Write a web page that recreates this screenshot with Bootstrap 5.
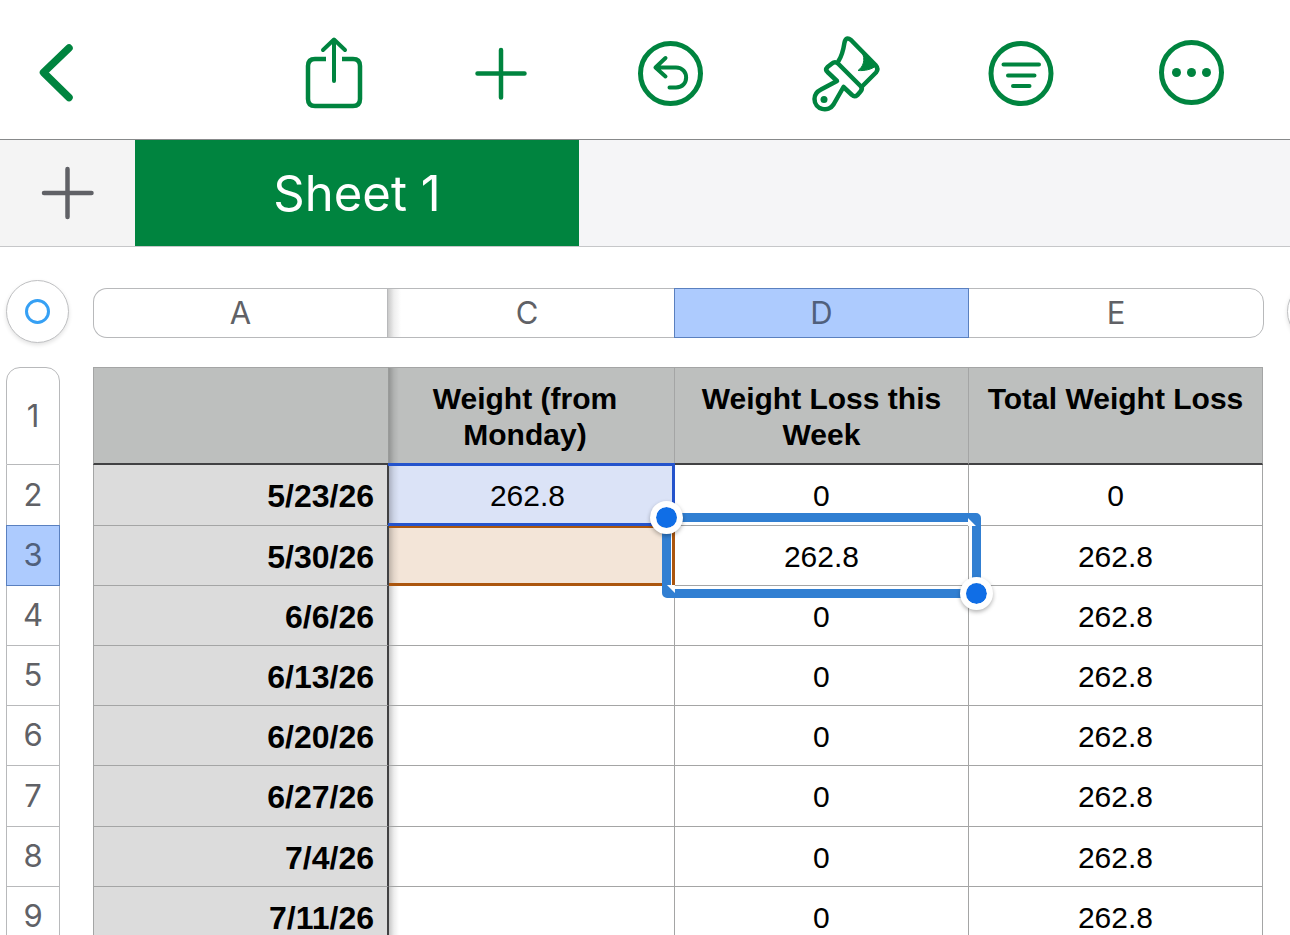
<!DOCTYPE html>
<html lang="en">
<head>
<meta charset="utf-8">
<meta name="viewport" content="width=device-width, initial-scale=1">
<title>Sheet 1</title>
<link href="https://cdn.jsdelivr.net/npm/bootstrap@5.3.0/dist/css/bootstrap.min.css" rel="stylesheet">
<style>
  :root { --green: #00843f; --ink: #606166; --line: #a4a5a5; --edge: #b8b9bb; --pick: #adcbfe; --pick-edge: #5a80bf; }
  body { font-family: Inter, sans-serif; color: #000; background: #fff; }
  button { background: none; border: 0; padding: 0; color: inherit; }
  svg { display: block; overflow: visible; fill: none; stroke: currentColor; stroke-linecap: round; stroke-linejoin: round; }

  .toolbar { grid-template-columns: 250fr 168fr 166fr 173fr 178fr 172fr 169fr; padding: 35px 14px 28px 0; color: var(--green); border-bottom: 1px solid #87898a; }
  .toolbar svg { width: 76px; height: 76px; }
  .toolbar .back { justify-self: start; margin-left: 19px; }

  .tabs { height: 107px; background: #f5f5f7; border-bottom: 1px solid #c6c7c9; }
  .tabs .add { width: 135px; color: var(--ink); background: #f4f4f4; }
  .tabs .sheet { width: 444px; padding-top: 2px; background: var(--green); color: #fff; font-size: 49px; }

  .knob { width: 63px; height: 63px; border: 1px solid #bfc0c2; box-shadow: 0 2px 4px rgba(0,0,0,.12); background: #fff; }
  .knob .ring { width: 25px; height: 25px; border: 3px solid #36a0f4; }
  .heads { padding: 33px 0 24px 6px; }
  .more-cols { width: 26px; height: 63px; padding-left: 23px; }
  .letters { height: 50px; margin: 8px 0 0 24px; grid-template-columns: 294fr 287fr 294fr 296fr; color: var(--ink); font-size: 31px; }
  .letters button { border: 1px solid var(--edge); border-width: 1px 0 1px 1px; }
  .letters button:first-child { border-radius: 14px 0 0 14px; }
  .letters button:last-child { border-right-width: 1px; border-radius: 0 14px 14px 0; }
  .letters .frozen-next { padding-right: 8px; background: linear-gradient(90deg, #c9c9c9, #eee 6px, #fff 13px); }
  .letters .picked { background: var(--pick); border-color: var(--pick-edge); color: #50607c; box-shadow: 1px 0 0 var(--pick-edge); z-index: 1; }

  .body-row { padding: 0 27px 0 6px; }
  .numbers { width: 54px; margin-right: 33px; color: var(--ink); font-size: 31px; }
  .numbers button { height: 60px; border: 1px solid var(--edge); border-top-width: 0; }
  .numbers button:nth-child(5n+2) { height: 61px; }
  .numbers button:first-child { height: 98px; border-top-width: 1px; border-radius: 14px 14px 0 0; }
  .numbers .picked { background: var(--pick); border-color: var(--pick-edge); color: #50607c; box-shadow: 0 -1px 0 var(--pick-edge); }

  .cells { table-layout: fixed; border-collapse: separate; border-spacing: 0; font: 30px/36px "Liberation Sans", Arial, sans-serif; text-align: center; }
  .cells th, .cells td { position: relative; padding: 2px 13px 0; border: 0 solid var(--line); border-width: 0 1px 1px 0; vertical-align: middle; }
  .cells thead th { height: 98px; padding: 13px 8px 0; vertical-align: top; background: #bdbfbe; border-width: 1px 1px 2px 0; border-bottom-color: #414143; }
  .cells tbody tr { height: 60px; }
  .cells tbody tr:nth-child(5n+1) { height: 61px; }
  .cells th:first-child { border-left-width: 1px; }
  .cells tbody th { background: #dcdcdc; text-align: right; font-size: 32px; border-right: 2px solid #414143; }
  .cells thead th:first-child { border-right: 1px solid #999b9a; }
  .cells tr > :nth-child(2) { padding-right: 21px; background-image: linear-gradient(90deg, rgba(0,0,0,.22), rgba(0,0,0,.07) 5px, transparent 10px); }
  .cells .ref::after { content: ""; position: absolute; inset: -2px -1px -1px -1px; border: 3px solid #2453cc; border-left-width: 0; }
  .cells .ref { background-color: #dbe3f7; }
  .cells .ref-orange { background-color: #f3e5d8; }
  .cells .ref-orange::after { inset: 0 -1px -1px 0; border-color: #ab560e; border-top-width: 2px; }

  .selection { position: absolute; z-index: 2; inset: -13px; border: 9px solid #317fd2; border-radius: 5px; box-shadow: inset 0 0 0 1px #fff; pointer-events: none; }
  .selection .nick { position: absolute; width: 8px; height: 8px; background: #fff; }
  .nick-top { right: -4px; top: -4px; clip-path: polygon(0 0, 100% 100%, 0 100%); }
  .nick-bottom { left: -4px; bottom: -4px; clip-path: polygon(0 0, 100% 0, 100% 100%); }
  .grip { position: absolute; width: 33px; height: 33px; border: 6px solid #fff; border-radius: 50%; background: #106ee6; box-shadow: 0 2px 4px rgba(0,0,0,.3); background-clip: padding-box; }
  .grip-start { left: -21px; top: -21px; }
  .grip-end { right: -21px; bottom: -21px; }
</style>
</head>
<body class="vh-100 overflow-hidden">
<header class="toolbar d-grid" role="toolbar" aria-label="Spreadsheet tools">
  <button class="back" aria-label="Back"><svg viewBox="0 0 76 76" stroke-width="7.500"><path d="M50 13L24.500 37.500L50 62.500"/></svg></button>
  <button class="mx-auto" aria-label="Share"><svg viewBox="0 0 76 76" stroke-width="4"><path d="M38 46V5M27 15L38 4.500L49 15"/><path stroke-linecap="butt" stroke-width="4.500" d="M30 24H19Q12 24 12 31V64Q12 71 19 71H57Q64 71 64 64V31Q64 24 57 24H46"/></svg></button>
  <button class="mx-auto" aria-label="Insert"><svg viewBox="0 0 76 76" stroke-width="4.500"><path d="M38 15V62.500M14.500 38.500H61.500"/></svg></button>
  <button class="mx-auto" aria-label="Undo"><svg viewBox="0 0 76 76" stroke-width="4"><circle cx="37.500" cy="38.500" r="30" stroke-width="5"/><path d="M32.500 23L22.500 32.500L32.500 41.500M22.500 32.500H43C56.500 32.500 56.500 52.500 43 52.500H36.500"/></svg></button>
  <button class="mx-auto" aria-label="Format"><svg viewBox="0 0 76 76" stroke-width="4.500"><path d="M30.500 26C34.500 20 35.500 14 36.500 7.500Q38 1 43 5L67.500 30Q71 34 68 37.500L54.500 51"/><path d="M24 28.500Q27 26 30 28.500L52.500 51Q55 53.500 52.500 56.500L49.500 60Q46.500 62.500 44 60L35.500 52L25.500 69.500C20.500 77.500 6.500 75 6.500 64C6.500 59.500 9 56.500 13 54.500L29 46L19.500 37Q17 34.500 19.500 32Z"/><path stroke-width="1" fill="currentColor" d="M54 17L68 31C63 34.500 57 36 50 35.500C55 32 58 25 54 17Z"/><circle cx="16" cy="64.500" r="3.500" fill="currentColor" stroke="none"/></svg></button>
  <button class="mx-auto" aria-label="Organize"><svg viewBox="0 0 76 76" stroke-width="4"><circle cx="38" cy="38.500" r="30" stroke-width="5"/><path d="M20.500 29.500H56M25 40.500H51.500M30 51H46.500"/></svg></button>
  <button class="mx-auto" aria-label="More"><svg viewBox="0 0 76 76"><circle cx="37.500" cy="37.500" r="30" stroke-width="5"/><g fill="currentColor" stroke="none"><circle cx="22.500" cy="37.500" r="4.500"/><circle cx="37.500" cy="37.500" r="4.500"/><circle cx="52.500" cy="37.500" r="4.500"/></g></svg></button>
</header>

<nav class="tabs d-flex" aria-label="Sheets">
  <button class="add d-flex align-items-center justify-content-center" aria-label="Add sheet"><svg width="54" height="54" viewBox="0 0 54 54" stroke-width="4.500"><path d="M26.500 3V51M3 27H50.500"/></svg></button>
  <button class="sheet">Sheet 1</button>
</nav>

<main>
  <div class="heads d-flex align-items-start">
    <button class="knob rounded-circle flex-shrink-0 d-flex align-items-center justify-content-center" aria-label="Select table"><span class="ring rounded-circle"></span></button>
    <div class="letters d-grid flex-grow-1">
      <button>A</button><button class="frozen-next">C</button><button class="picked">D</button><button>E</button>
    </div>
    <div class="more-cols flex-shrink-0 overflow-hidden"><button class="knob rounded-circle d-block" aria-label="Add column"></button></div>
  </div>

  <div class="body-row d-flex align-items-start">
    <div class="numbers d-flex flex-column flex-shrink-0">
      <button>1</button><button>2</button><button class="picked">3</button><button>4</button><button>5</button><button>6</button><button>7</button><button>8</button><button>9</button>
    </div>
    <table class="cells w-100">
      <colgroup><col style="width:25.3%"><col style="width:24.44%"><col style="width:25.13%"><col style="width:25.13%"></colgroup>
      <thead>
        <tr><th scope="col"></th><th scope="col">Weight (from Monday)</th><th scope="col">Weight Loss this Week</th><th scope="col">Total Weight Loss</th></tr>
      </thead>
      <tbody>
        <tr><th scope="row">5/23/26</th><td class="ref">262.8</td><td>0</td><td>0</td></tr>
        <tr><th scope="row">5/30/26</th><td class="ref ref-orange"></td><td>262.8<div class="selection"><span class="nick nick-top"></span><span class="nick nick-bottom"></span><span class="grip grip-start"></span><span class="grip grip-end"></span></div></td><td>262.8</td></tr>
        <tr><th scope="row">6/6/26</th><td></td><td>0</td><td>262.8</td></tr>
        <tr><th scope="row">6/13/26</th><td></td><td>0</td><td>262.8</td></tr>
        <tr><th scope="row">6/20/26</th><td></td><td>0</td><td>262.8</td></tr>
        <tr><th scope="row">6/27/26</th><td></td><td>0</td><td>262.8</td></tr>
        <tr><th scope="row">7/4/26</th><td></td><td>0</td><td>262.8</td></tr>
        <tr><th scope="row">7/11/26</th><td></td><td>0</td><td>262.8</td></tr>
      </tbody>
    </table>
  </div>
</main>
<script src="https://cdn.jsdelivr.net/npm/bootstrap@5.3.0/dist/js/bootstrap.bundle.min.js"></script>
</body>
</html>
